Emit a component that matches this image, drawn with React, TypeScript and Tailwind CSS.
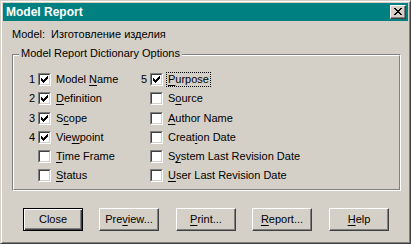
const face = 'bg-[#d4d0c8]'

type Opt = { num?: string; label: React.ReactNode; checked: boolean; focus?: boolean }

const U = ({ children }: { children: React.ReactNode }) => (
  <span className="underline decoration-1 underline-offset-[2px]">{children}</span>
)

const Check = () => (
  <svg width="9" height="9" viewBox="0 0 9 9" shapeRendering="crispEdges">
    <path
      d="M1 3h1v3H1z M2 4h1v3H2z M3 5h1v3H3z M4 4h1v3H4z M5 3h1v3H5z M6 2h1v3H6z M7 1h1v3H7z"
      fill="#000"
    />
  </svg>
)

const CheckBox = ({ checked }: { checked: boolean }) => (
  <div className="w-[13px] h-[13px] shrink-0 border border-t-[#808080] border-l-[#808080] border-r-white border-b-white">
    <div className="w-full h-full bg-white border border-t-[#404040] border-l-[#404040] border-r-[#d4d0c8] border-b-[#d4d0c8]">
      {checked && <Check />}
    </div>
  </div>
)

const Row = ({ num, label, checked, focus, gap }: Opt & { gap?: boolean }) => (
  <div className={`h-[19px] flex items-center ${gap ? 'mt-[1px]' : ''}`}>
    <span className="w-[24px] pr-[3px] text-right">{num}</span>
    <CheckBox checked={checked} />
    <span className={`ml-[4px] px-[1px] leading-[13px] ${focus ? '[outline:1px_dotted_#000]' : ''}`}>
      {label}
    </span>
  </div>
)

const left: Opt[] = [
  { num: '1', label: <>Model <U>N</U>ame</>, checked: true },
  { num: '2', label: <><U>D</U>efinition</>, checked: true },
  { num: '3', label: <>S<U>c</U>ope</>, checked: true },
  { num: '4', label: <>Vie<U>w</U>point</>, checked: true },
  { label: <><U>T</U>ime Frame</>, checked: false },
  { label: <><U>S</U>tatus</>, checked: false },
]

const right: Opt[] = [
  { num: '5', label: <><U>P</U>urpose</>, checked: true, focus: true },
  { label: <>S<U>o</U>urce</>, checked: false },
  { label: <><U>A</U>uthor Name</>, checked: false },
  { label: <>Creat<U>i</U>on Date</>, checked: false },
  { label: <>S<U>y</U>stem Last Revision Date</>, checked: false },
  { label: <><U>U</U>ser Last Revision Date</>, checked: false },
]

const Button = ({ children, def, className = '' }: { children: React.ReactNode; def?: boolean; className?: string }) => (
  <button
    className={`w-[60px] h-[23px] ${face} flex items-center justify-center leading-[13px] ${
      def
        ? 'border border-black shadow-[inset_1px_1px_0_#fff,inset_-1px_-1px_0_#404040,inset_-2px_-2px_0_#808080]'
        : 'border border-t-white border-l-white border-r-[#404040] border-b-[#404040] shadow-[inset_-1px_-1px_0_#808080]'
    } ${className}`}
  >
    {children}
  </button>
)

export default function App() {
  return (
    <div
      className={`w-[411px] h-[244px] ${face} p-[2px] border border-t-[#d4d0c8] border-l-[#d4d0c8] border-r-[#404040] border-b-[#404040] shadow-[inset_1px_1px_0_#fff,inset_-1px_-1px_0_#808080] text-black text-[11px] font-['Liberation_Sans',Arial,sans-serif] flex flex-col`}
    >
      {/* title bar */}
      <div className="h-[18px] bg-[#008080] flex items-center justify-between pl-[3px] pr-[2px]">
        <span className="text-white font-bold text-[12px] leading-[14px]">Model Report</span>
        <div className="w-[16px] h-[14px] bg-[#d4d0c8] border border-t-white border-l-white border-r-[#404040] border-b-[#404040] shadow-[inset_-1px_-1px_0_#808080] flex items-center justify-center">
          <svg width="8" height="7" viewBox="0 0 8 7" shapeRendering="crispEdges" className="-mt-[1px] -ml-[1px]">
            <path
              d="M0 0h2v1H0z M6 0h2v1H6z M1 1h2v1H1z M5 1h2v1H5z M2 2h4v1H2z M3 3h2v1H3z M2 4h4v1H2z M1 5h2v1H1z M5 5h2v1H5z M0 6h2v1H0z M6 6h2v1H6z"
              fill="#000"
            />
          </svg>
        </div>
      </div>

      <div className="pl-[9px]">
        <div className="mt-[7px] flex leading-[13px]">
          <span className="w-[39px]">Model:</span>
          <span>Изготовление изделия</span>
        </div>

        {/* group box */}
        <div className="mt-[13px] w-[389px] h-[137px] border border-t-[#808080] border-l-[#808080] border-r-white border-b-white">
          <div className="w-full h-full border border-t-white border-l-white border-r-[#808080] border-b-[#808080]">
            <div className={`-mt-[9px] ml-[5px] px-[2px] w-fit leading-[13px] ${face}`}>
              Model Report Dictionary Options
            </div>
            <div className="mt-[10px] flex">
              <div className="w-[112px] flex flex-col">
                {left.map((o, i) => (
                  <Row key={i} gap={i === 2} {...o} />
                ))}
              </div>
              <div className="flex flex-col">
                {right.map((o, i) => (
                  <Row key={i} gap={i === 2} {...o} />
                ))}
              </div>
            </div>
          </div>
        </div>

        {/* buttons */}
        <div className="mt-[17px] ml-[11px] flex">
          <Button def>Close</Button>
          <Button className="ml-[16px]">Pre<U>v</U>iew...</Button>
          <Button className="ml-[17px]"><U>P</U>rint...</Button>
          <Button className="ml-[16px]"><U>R</U>eport...</Button>
          <Button className="ml-[17px]"><U>H</U>elp</Button>
        </div>
      </div>
    </div>
  )
}
